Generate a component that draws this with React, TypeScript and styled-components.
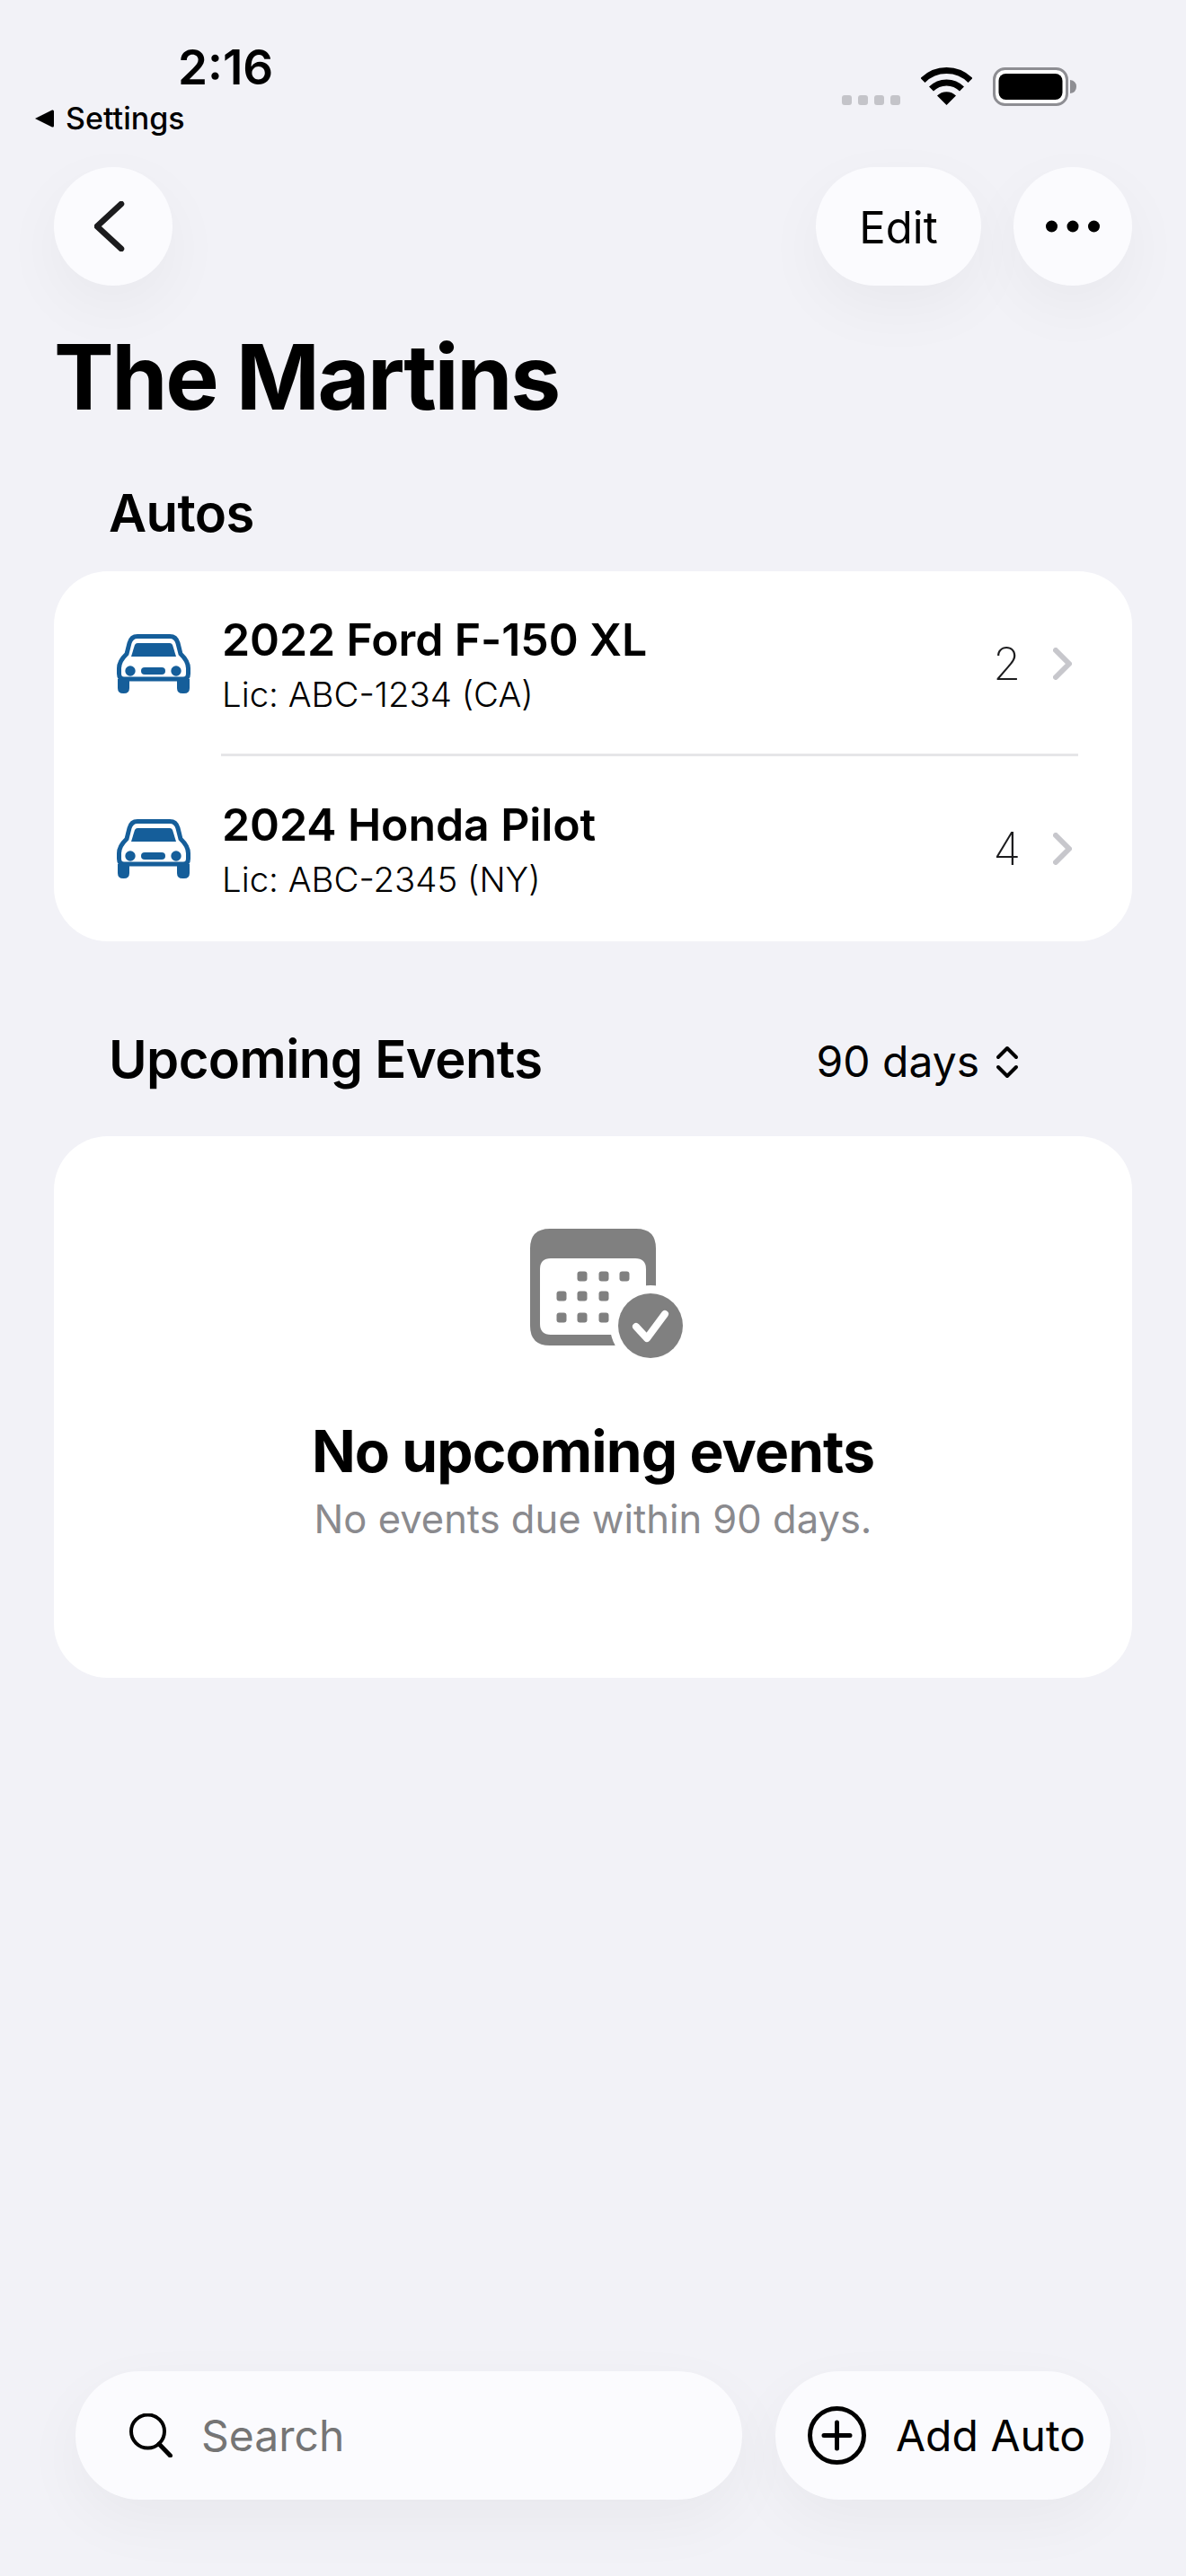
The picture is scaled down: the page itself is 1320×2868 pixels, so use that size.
import { createGlobalStyle, styled } from 'styled-components';

const GlobalStyle = createGlobalStyle`
  html, body {
    margin: 0;
    padding: 0;
    background: #f2f2f7;
    font-family: Inter, "Liberation Sans", sans-serif;
    color: #000;
  }
`;

const Page = styled.div`
  width: 1320px;
  height: 2868px;
  display: flex;
  flex-direction: column;
  overflow: hidden;
`;
const StatusBar = styled.div`
  height: 186px;
  display: flex;
  justify-content: space-between;
  flex-shrink: 0;
`;
const StatusLeft = styled.div`
  padding: 45px 0 0 38px;
`;
const Time = styled.div`
  padding-left: 160px;
  font-size: 53px;
  line-height: 60px;
  font-weight: 600;
`;
const BackLink = styled.div`
  margin-top: 7px;
  display: flex;
  align-items: center;
  gap: 13px;
  font-size: 34px;
  line-height: 40px;
  font-weight: 500;
`;
const StatusRight = styled.div`
  padding: 75px 122px 0 0;
  display: flex;
  align-items: flex-start;
`;
const CellDots = styled.div`
  margin: 31px 23px 0 0;
  display: flex;
  gap: 7px;
`;
const CellDot = styled.span`
  width: 11px;
  height: 11px;
  border-radius: 3px;
  background: #c4c4c9;
`;
const Battery = styled.svg`
  margin-left: 23px;
`;
const Content = styled.main`
  padding: 0 60px;
  display: flex;
  flex-direction: column;
`;
const NavRow = styled.div`
  display: flex;
  align-items: center;
  gap: 36px;
`;
const Spacer = styled.div`
  flex: 1;
`;
const NavButton = styled.button<{ $wide?: boolean }>`
  width: ${(p) => (p.$wide ? '184px' : '132px')};
  height: 132px;
  padding: ${(p) => (p.$wide ? '2px 0 0' : '0')};
  border: none;
  border-radius: 66px;
  background: #fbfbfe;
  box-shadow: 0 24px 70px rgba(0, 0, 0, 0.045);
  display: flex;
  align-items: center;
  justify-content: center;
  font-family: inherit;
  font-size: 49px;
  font-weight: 400;
  color: #000;
`;
const Title = styled.h1`
  margin: 52px 0 0;
  font-size: 100px;
  line-height: 100px;
  font-weight: 700;
  letter-spacing: -2.4px;
`;
const SectionTitle = styled.h2`
  margin: 0;
  font-size: 58px;
  line-height: 70px;
  font-weight: 600;
  letter-spacing: -0.6px;
`;
const AutosHeader = styled.div`
  margin: 66px 0 30px;
  padding-left: 61px;
`;
const Card = styled.section`
  background: #fff;
  border-radius: 60px;
`;
const AutoRow = styled.div<{ $last?: boolean }>`
  display: flex;
  align-items: center;
  padding: 46px 67px ${(p) => (p.$last ? '46px' : '43px')} 70px;
`;
const AutoText = styled.div`
  margin-left: 35px;
  flex: 1;
  display: flex;
  flex-direction: column;
  gap: 8px;
`;
const AutoName = styled.div`
  font-size: 50px;
  line-height: 60px;
  font-weight: 600;
  letter-spacing: -0.1px;
`;
const AutoPlate = styled.div`
  font-size: 38.4px;
  line-height: 46px;
  font-weight: 300;
  color: #000;
`;
const Count = styled.div`
  margin-right: 36px;
  font-size: 50px;
  line-height: 60px;
  font-weight: 200;
  color: #1c1c1e;
`;
const Divider = styled.div`
  height: 3px;
  margin: 0 60px 0 186px;
  background: #e6e6e8;
`;
const EventsHeader = styled.div`
  margin: 96px 0 51px;
  padding: 0 126px 0 61px;
  display: flex;
  justify-content: space-between;
  align-items: center;
`;
const RangePicker = styled.div`
  margin-top: 6px;
  display: flex;
  align-items: center;
  gap: 18px;
  font-size: 48px;
  line-height: 64px;
  font-weight: 400;
`;
const EmptyCard = styled(Card)`
  height: 603px;
  box-sizing: border-box;
  padding-top: 103px;
  display: flex;
  flex-direction: column;
  align-items: center;
`;
const EmptyIcon = styled.svg`
  overflow: visible;
  display: block;
`;
const EmptyTitle = styled.div`
  margin-top: 79px;
  font-size: 64px;
  line-height: 78px;
  font-weight: 700;
  letter-spacing: -0.9px;
`;
const EmptyText = styled.div`
  margin-top: 11px;
  font-size: 43.5px;
  line-height: 50px;
  font-weight: 400;
  color: #8a8a8e;
`;
const BottomBar = styled.div`
  margin-top: auto;
  padding: 0 84px 85px;
  display: flex;
  gap: 37px;
`;
const SearchBox = styled.div`
  flex: 1;
  height: 143px;
  padding-left: 60px;
  display: flex;
  align-items: center;
  gap: 32px;
  border-radius: 72px;
  background: #fbfbfe;
  box-shadow: 0 24px 70px rgba(0, 0, 0, 0.045);
  font-size: 48px;
  color: #757575;
`;
const AddButton = styled.button`
  width: 373px;
  height: 143px;
  padding: 0 0 0 36px;
  border: none;
  border-radius: 72px;
  background: #fbfbfe;
  box-shadow: 0 24px 70px rgba(0, 0, 0, 0.045);
  display: flex;
  align-items: center;
  gap: 33px;
  font-family: inherit;
  font-size: 48px;
  font-weight: 400;
  color: #000;
`;

const CarIcon = () => (
  <svg width="82" height="66" viewBox="0 0 82 66" fill="#155e9a">
    <path
      d="M23 2.5H59Q66 2.5 68 10L71 22Q79.5 30 79.5 38V44Q79.5 50 74 50H8Q2.5 50 2.5 44V38Q2.5 30 11 22L14 10Q16 2.5 23 2.5Z"
      fill="none"
      stroke="#155e9a"
      strokeWidth="5"
    />
    <path d="M23 10H59Q61 10 62 12L66 25H16L20 12Q21 10 23 10Z" />
    <path d="M1 50H14V60Q14 66 8 66H7Q1 66 1 60Z" />
    <path d="M67 50H81V60Q81 66 75 66H73Q67 66 67 60Z" />
    <circle cx="15" cy="41" r="5.7" />
    <circle cx="66" cy="41" r="5.7" />
    <rect x="27" y="37" width="27" height="8" rx="4" />
  </svg>
);

const Chevron = () => (
  <svg width="21" height="36" viewBox="0 0 21 36" fill="none">
    <path d="M3 3L18 18L3 33" stroke="#c7c7cc" strokeWidth="6" strokeLinecap="round" strokeLinejoin="round" />
  </svg>
);

const calendarDots = [
  [58, 53],
  [82, 53],
  [105, 53],
  [35, 75],
  [58, 75],
  [82, 75],
  [35, 99],
  [58, 99],
  [82, 99],
];

const autos = [
  { name: '2022 Ford F-150 XL', plate: 'Lic: ABC-1234 (CA)', count: 2 },
  { name: '2024 Honda Pilot', plate: 'Lic: ABC-2345 (NY)', count: 4 },
];

export default function App() {
  return (
    <Page>
      <GlobalStyle />
      <StatusBar>
        <StatusLeft>
          <Time>2:16</Time>
          <BackLink>
            <svg width="22" height="22" viewBox="0 0 22 22">
              <path d="M1 11L20 1.5Q22 1 22 3V19Q22 21 20 20.5Z" fill="#000" />
            </svg>
            Settings
          </BackLink>
        </StatusLeft>
        <StatusRight>
          <CellDots>
            <CellDot />
            <CellDot />
            <CellDot />
            <CellDot />
          </CellDots>
          <svg width="57" height="42" viewBox="0 0 57 42" fill="none" stroke="#000" strokeWidth="7">
            <path d="M2 14.5A37.5 37.5 0 0 1 55 14.5" />
            <path d="M11.5 24A24 24 0 0 1 45.5 24" />
            <path d="M28.5 42L18 31.5A15 15 0 0 1 39 31.5Z" fill="#000" stroke="none" />
          </svg>
          <Battery width="93" height="43" viewBox="0 0 93 43" fill="none">
            <rect x="1.5" y="1.5" width="81" height="40" rx="12" fill="#fff" stroke="#8e8e93" strokeWidth="3" />
            <rect x="6.5" y="7" width="71" height="29" rx="8" fill="#000" />
            <path d="M86 14Q93 15 93 21.5Q93 28 86 29Z" fill="#8e8e93" />
          </Battery>
        </StatusRight>
      </StatusBar>

      <Content>
        <NavRow>
          <NavButton aria-label="Back">
            <svg width="42" height="56" viewBox="0 0 42 56" fill="none">
              <path d="M30 3L3 28L30 53" stroke="#1c1c1e" strokeWidth="6.5" strokeLinecap="round" strokeLinejoin="round" />
            </svg>
          </NavButton>
          <Spacer />
          <NavButton $wide>Edit</NavButton>
          <NavButton aria-label="More">
            <svg width="60" height="14" viewBox="0 0 60 14" fill="#000">
              <circle cx="6.5" cy="7" r="6.5" />
              <circle cx="30" cy="7" r="6.5" />
              <circle cx="53.5" cy="7" r="6.5" />
            </svg>
          </NavButton>
        </NavRow>

        <Title>The Martins</Title>

        <AutosHeader>
          <SectionTitle>Autos</SectionTitle>
        </AutosHeader>
        <Card>
          {autos.map((auto, i) => (
            <div key={auto.name}>
              {i > 0 && <Divider />}
              <AutoRow $last={i === autos.length - 1}>
                <CarIcon />
                <AutoText>
                  <AutoName>{auto.name}</AutoName>
                  <AutoPlate>{auto.plate}</AutoPlate>
                </AutoText>
                <Count>{auto.count}</Count>
                <Chevron />
              </AutoRow>
            </div>
          ))}
        </Card>

        <EventsHeader>
          <SectionTitle>Upcoming Events</SectionTitle>
          <RangePicker>
            90 days
            <svg width="26" height="37" viewBox="0 0 26 37" fill="none" stroke="#000" strokeWidth="4" strokeLinecap="round" strokeLinejoin="round">
              <path d="M3 13L13 3L23 13" />
              <path d="M3 24L13 34L23 24" />
            </svg>
          </RangePicker>
        </EventsHeader>
        <EmptyCard>
          <EmptyIcon width="140" height="130" viewBox="0 0 140 130">
            <path
              fillRule="evenodd"
              fill="#808080"
              d="M22 0H118Q140 0 140 22V108Q140 130 118 130H22Q0 130 0 108V22Q0 0 22 0ZM23 33Q11 33 11 45V106Q11 118 23 118H117Q129 118 129 106V45Q129 33 117 33Z"
            />
            {calendarDots.map(([x, y]) => (
              <rect key={`${x}-${y}`} x={x - 5.5} y={y - 5.5} width="11" height="11" rx="3" fill="#808080" />
            ))}
            <circle cx="134" cy="108" r="45" fill="#fff" />
            <circle cx="134" cy="108" r="36" fill="#808080" />
            <path d="M118 109L130 122L150 95" fill="none" stroke="#fff" strokeWidth="8" strokeLinecap="round" strokeLinejoin="round" />
          </EmptyIcon>
          <EmptyTitle>No upcoming events</EmptyTitle>
          <EmptyText>No events due within 90 days.</EmptyText>
        </EmptyCard>
      </Content>

      <BottomBar>
        <SearchBox>
          <svg width="48" height="49" viewBox="0 0 48 49" fill="none" stroke="#000" strokeLinecap="round">
            <circle cx="20.5" cy="20" r="18.5" strokeWidth="4" />
            <path d="M33 34L45.5 47" strokeWidth="5" />
          </svg>
          Search
        </SearchBox>
        <AddButton>
          <svg width="65" height="65" viewBox="0 0 65 65" fill="none" stroke="#000" strokeWidth="5" strokeLinecap="round">
            <circle cx="32.5" cy="32.5" r="30" />
            <path d="M18 32.5H47M32.5 18V47" />
          </svg>
          Add Auto
        </AddButton>
      </BottomBar>
    </Page>
  );
}
